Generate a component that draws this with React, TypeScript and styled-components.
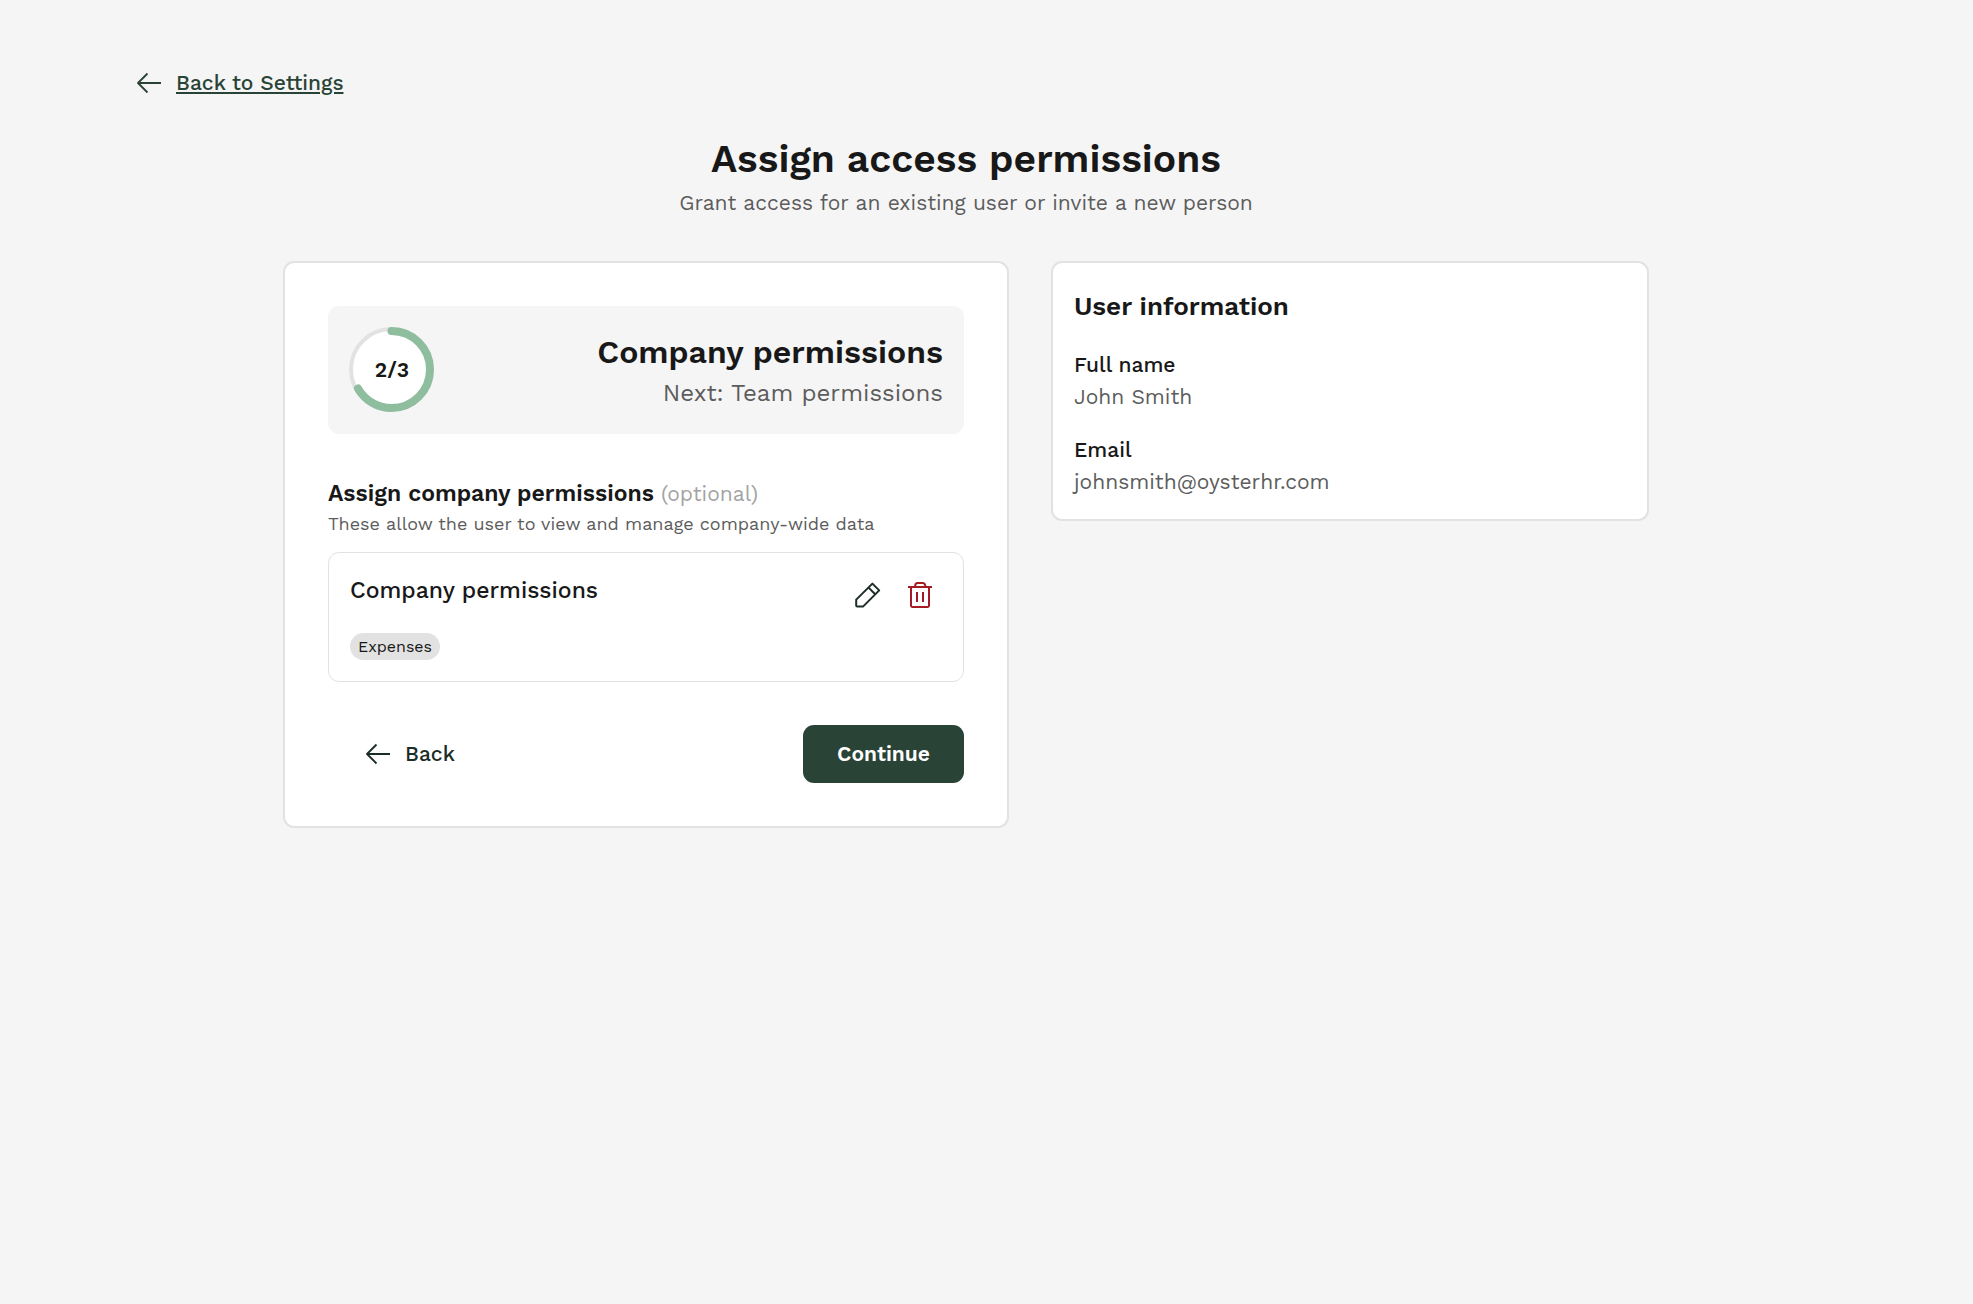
import React from "react";
import styled, { createGlobalStyle } from "styled-components";

const color = {
  page: "#f5f5f5",
  surface: "#ffffff",
  border: "#e2e2e2",
  ink: "#181818",
  muted: "#5c5c5c",
  faint: "#a3a3a3",
  forest: "#294436",
  deep: "#1b2d26",
  mint: "#8fbe9f",
  danger: "#a51b23",
};

const GlobalStyle = createGlobalStyle`
  *, *::before, *::after { box-sizing: border-box; }
  body {
    margin: 0;
    background: ${color.page};
    color: ${color.ink};
    font-family: "Work Sans", Inter, "Liberation Sans", sans-serif;
    font-size: 21px;
    line-height: 32px;
    -webkit-font-smoothing: antialiased;
  }
  h1, h2, h3, p, dl, dd, ul { margin: 0; padding: 0; }
  button { font: inherit; border: 0; background: none; padding: 0; cursor: pointer; }
`;

const Page = styled.main`
  min-height: 100vh;
  padding: 67px 174px 67px 133px;
`;

const BackLink = styled.a`
  display: flex;
  align-items: center;
  gap: 11px;
  width: fit-content;
  color: ${color.forest};
  font-weight: 500;
  text-decoration: none;

  span {
    text-decoration: underline;
    text-decoration-thickness: 2px;
    text-underline-offset: 2px;
  }
`;

const PageHeader = styled.header`
  display: flex;
  flex-direction: column;
  align-items: center;
  gap: 4px;
  margin-top: 36px;
  text-align: center;
`;

const PageTitle = styled.h1`
  font-size: 39px;
  line-height: 48px;
  font-weight: 600;
`;

const Muted = styled.p`
  color: ${color.muted};
`;

const Columns = styled.div`
  display: grid;
  grid-template-columns: minmax(0, 726fr) minmax(0, 598fr);
  align-items: start;
  gap: 42px;
  max-width: 1366px;
  margin: 42px auto 0;
`;

const Card = styled.section<{ $pad: number }>`
  padding: ${(p) => p.$pad}px;
  border: 2px solid ${color.border};
  border-radius: 11px;
  background: ${color.surface};
`;

const StepBanner = styled.div`
  display: flex;
  align-items: center;
  justify-content: space-between;
  padding: 21px;
  border-radius: 11px;
  background: ${color.page};
`;

const Ring = styled.svg`
  display: block;
  width: 86px;
  height: 86px;

  text {
    font-size: 21px;
    font-weight: 600;
    fill: ${color.ink};
    text-anchor: middle;
  }
`;

const StepText = styled.div`
  padding-top: 4px;
  text-align: right;
`;

const StepTitle = styled.h2`
  font-size: 32px;
  line-height: 42px;
  font-weight: 600;
`;

const StepNext = styled.p`
  color: ${color.muted};
  font-size: 24px;
  line-height: 40px;
`;

const SectionTitle = styled.h3`
  margin-top: 43px;
  font-size: 23px;
  line-height: 34px;
  font-weight: 600;

  small {
    color: ${color.faint};
    font-size: 21px;
    font-weight: 400;
  }
`;

const SectionHint = styled.p`
  color: ${color.muted};
  font-size: 18px;
  line-height: 25px;
`;

const PermissionCard = styled.article`
  display: flex;
  flex-direction: column;
  gap: 17px;
  margin-top: 16px;
  padding: 21px;
  border: 1px solid ${color.border};
  border-radius: 11px;
`;

const PermissionHead = styled.div`
  display: flex;
  align-items: flex-start;
  justify-content: space-between;
`;

const PermissionName = styled.h3`
  font-size: 23px;
  line-height: 34px;
  font-weight: 500;
`;

const IconRow = styled.div`
  display: flex;
  gap: 11px;
`;

const IconButton = styled.button<{ $danger?: boolean }>`
  display: grid;
  place-items: center;
  width: 42px;
  height: 42px;
  color: ${(p) => (p.$danger ? color.danger : color.deep)};
`;

const Tags = styled.ul`
  display: flex;
  gap: 8px;
  list-style: none;
`;

const Tag = styled.li`
  padding: 0 8px;
  border-radius: 14px;
  background: ${color.border};
  font-size: 16px;
  line-height: 27px;
`;

const Actions = styled.div`
  display: flex;
  align-items: center;
  justify-content: space-between;
  margin-top: 43px;
`;

const Button = styled.button<{ $primary?: boolean }>`
  display: inline-flex;
  align-items: center;
  justify-content: center;
  gap: 11px;
  height: 58px;
  padding: 0 34px;
  border-radius: 11px;
  font-weight: ${(p) => (p.$primary ? 600 : 500)};
  color: ${(p) => (p.$primary ? color.surface : color.deep)};
  background: ${(p) => (p.$primary ? color.forest : "transparent")};
`;

const InfoTitle = styled.h2`
  font-size: 26px;
  line-height: 44px;
  font-weight: 600;
`;

const Field = styled.div`
  margin-top: 21px;

  dt { font-weight: 500; }
  dd { color: ${color.muted}; }
`;

function Icon({ children }: { children: React.ReactNode }) {
  return (
    <svg
      width="32"
      height="32"
      viewBox="0 0 32 32"
      fill="none"
      stroke="currentColor"
      strokeWidth="2"
      strokeLinejoin="round"
      aria-hidden="true"
    >
      {children}
    </svg>
  );
}

const ArrowLeft = () => (
  <Icon>
    <path d="M28 16H5M14.5 6.5L5 16l9.5 9.5" strokeWidth="1.8" />
  </Icon>
);

const Pencil = () => (
  <Icon>
    <path d="M4.2 20.6 20.4 4.6l6.8 6.8L11 27.6H5.2a1 1 0 0 1-1-1zM16.6 8.6l6.6 6.6" />
  </Icon>
);

const Trash = () => (
  <Icon>
    <path d="M3 8h24M6 8v18.5A1.5 1.5 0 0 0 7.5 28h15a1.5 1.5 0 0 0 1.5-1.5V8M10.2 8V6.5A2.5 2.5 0 0 1 12.7 4h5a2.5 2.5 0 0 1 2.5 2.5V8M12 13v10M18 13v10" />
  </Icon>
);

function ProgressRing({ step, total }: { step: number; total: number }) {
  const center = 42.5;
  const radius = 38.5;
  const length = 2 * Math.PI * radius;
  return (
    <Ring viewBox="0 0 86 86" role="img" aria-label={`Step ${step} of ${total}`}>
      <circle cx={center} cy={center} r="40.5" fill={color.surface} stroke={color.border} strokeWidth="4" />
      <circle
        cx={center}
        cy={center}
        r={radius}
        fill="none"
        stroke={color.mint}
        strokeWidth="8"
        strokeLinecap="round"
        strokeDasharray={`${(length * step) / total} ${length}`}
        transform={`rotate(-90 ${center} ${center})`}
      />
      <text x="43" y="50">{`${step}/${total}`}</text>
    </Ring>
  );
}

const user = [
  { label: "Full name", value: "John Smith" },
  { label: "Email", value: "johnsmith@oysterhr.com" },
];

export default function App() {
  return (
    <>
      <GlobalStyle />
      <Page>
        <BackLink href="#settings">
          <ArrowLeft />
          <span>Back to Settings</span>
        </BackLink>

        <PageHeader>
          <PageTitle>Assign access permissions</PageTitle>
          <Muted>Grant access for an existing user or invite a new person</Muted>
        </PageHeader>

        <Columns>
          <Card $pad={43}>
            <StepBanner>
              <ProgressRing step={2} total={3} />
              <StepText>
                <StepTitle>Company permissions</StepTitle>
                <StepNext>Next: Team permissions</StepNext>
              </StepText>
            </StepBanner>

            <SectionTitle>
              Assign company permissions <small>(optional)</small>
            </SectionTitle>
            <SectionHint>These allow the user to view and manage company-wide data</SectionHint>

            <PermissionCard>
              <PermissionHead>
                <PermissionName>Company permissions</PermissionName>
                <IconRow>
                  <IconButton type="button" aria-label="Edit company permissions">
                    <Pencil />
                  </IconButton>
                  <IconButton type="button" $danger aria-label="Delete company permissions">
                    <Trash />
                  </IconButton>
                </IconRow>
              </PermissionHead>
              <Tags>
                <Tag>Expenses</Tag>
              </Tags>
            </PermissionCard>

            <Actions>
              <Button type="button">
                <ArrowLeft />
                Back
              </Button>
              <Button type="button" $primary>
                Continue
              </Button>
            </Actions>
          </Card>

          <Card $pad={21}>
            <InfoTitle>User information</InfoTitle>
            <dl>
              {user.map((field) => (
                <Field key={field.label}>
                  <dt>{field.label}</dt>
                  <dd>{field.value}</dd>
                </Field>
              ))}
            </dl>
          </Card>
        </Columns>
      </Page>
    </>
  );
}
